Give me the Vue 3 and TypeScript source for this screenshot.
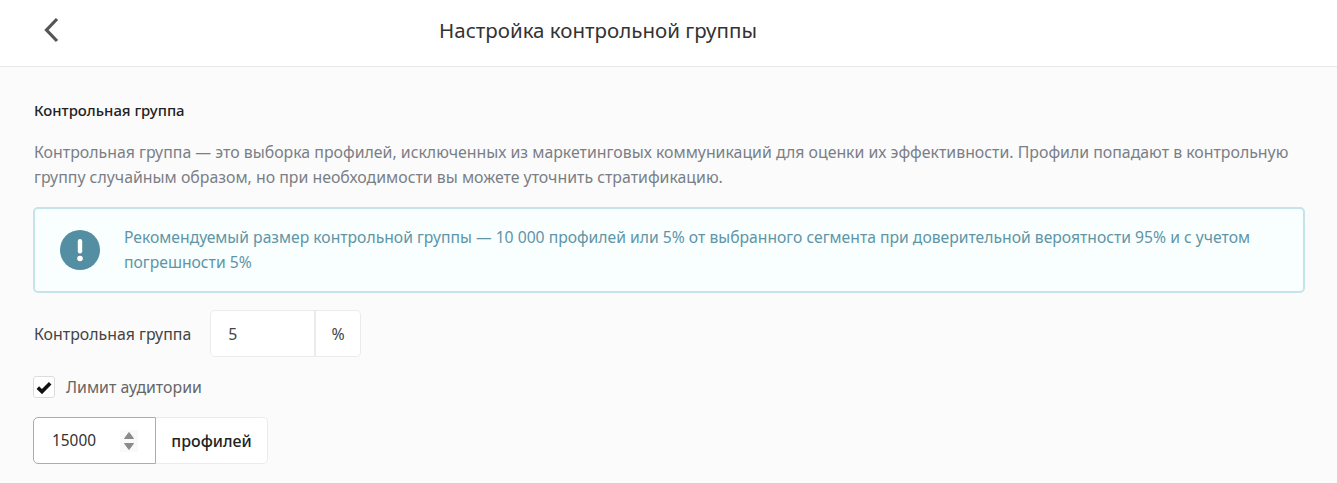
<template>
  <div class="page">
    <header class="topbar">
      <button class="back" aria-label="Назад">
        <svg width="16" height="26" viewBox="0 0 16 26">
          <path d="M14 2 L3.5 13 L14 24" fill="none" stroke="#555" stroke-width="3.2" />
        </svg>
      </button>
      <h1 class="title">Настройка контрольной группы</h1>
    </header>
    <main class="content">
      <h2 class="section-title">Контрольная группа</h2>
      <p class="description">{{ description }}</p>
      <div class="notice">
        <svg class="notice-icon" width="40" height="40" viewBox="0 0 40 40">
          <circle cx="20" cy="20" r="20" fill="#548ea2" />
          <rect x="17.8" y="9" width="4.4" height="14.5" rx="2.2" fill="#fff" />
          <circle cx="20" cy="28.5" r="2.8" fill="#fff" />
        </svg>
        <p class="notice-text">{{ notice }}</p>
      </div>
      <div class="size-row">
        <label class="size-label">Контрольная группа</label>
        <div class="group">
          <div class="field percent-field">{{ percent }}</div>
          <div class="addon percent-addon">%</div>
        </div>
      </div>
      <div class="check-row">
        <span class="checkbox">
          <svg width="16" height="13" viewBox="0 0 16 13">
            <path d="M1.8 6.6 L6 10.6 L14.2 2.2" fill="none" stroke="#111" stroke-width="3.6" />
          </svg>
        </span>
        <span class="check-label">Лимит аудитории</span>
      </div>
      <div class="group">
        <div class="field limit-field">
          <span>{{ limit }}</span>
          <span class="spinner">
            <svg width="18" height="22" viewBox="0 0 18 22">
              <rect width="18" height="22" fill="#f9f9f9" />
              <path d="M9 2.5 L13.5 8.5 H4.5 Z" fill="#8a8a8a" stroke="#8a8a8a" stroke-linejoin="round" />
              <path d="M9 19.5 L4.5 13.5 H13.5 Z" fill="#8a8a8a" stroke="#8a8a8a" stroke-linejoin="round" />
            </svg>
          </span>
        </div>
        <div class="addon limit-addon">профилей</div>
      </div>
    </main>
  </div>
</template>

<script setup lang="ts">
const description =
  'Контрольная группа — это выборка профилей, исключенных из маркетинговых коммуникаций для оценки их эффективности. Профили попадают в контрольную группу случайным образом, но при необходимости вы можете уточнить стратификацию.'
const notice =
  'Рекомендуемый размер контрольной группы — 10 000 профилей или 5% от выбранного сегмента при доверительной вероятности 95% и с учетом погрешности 5%'
const percent = 5
const limit = 15000
</script>

<style>
html,
body {
  margin: 0;
  background: #fbfbfb;
}
</style>

<style scoped>
.page {
  height: 483px;
  overflow: hidden;
  background: #fbfbfb;
  font-family: "Noto Sans", "Open Sans", sans-serif;
  font-size: 15.87px;
  color: #444;
}

.topbar {
  display: flex;
  align-items: center;
  box-sizing: border-box;
  height: 67px;
  padding-bottom: 7px;
  background: #fff;
  border-bottom: 1px solid #e8e8e8;
}

.back {
  display: flex;
  width: 53px;
  margin-left: 43px;
  padding: 0;
  border: 0;
  background: none;
}

.title {
  margin: 0 0 0 343px;
  font-size: 20.5px;
  font-weight: 400;
  color: #333;
}

.content {
  padding: 33px 32px 0 33px;
}

.section-title {
  margin: 0;
  padding-left: 1px;
  font-size: 14.9px;
  line-height: 20px;
  font-weight: 500;
  color: #222;
}

.description {
  margin: 20px 0 0;
  padding-left: 1px;
  line-height: 25px;
  color: #7a7f87;
}

.notice {
  display: flex;
  align-items: center;
  gap: 24px;
  margin-top: 17px;
  padding: 16px 40px 16px 25px;
  background: #f9ffff;
  border: 2px solid #c5e3ea;
  border-radius: 5px;
}

.notice-icon {
  flex: none;
}

.notice-text {
  margin: 0;
  font-size: 15.7px;
  line-height: 25px;
  color: #5f95a6;
}

.size-row {
  display: flex;
  align-items: center;
  gap: 19px;
  margin-top: 17px;
}

.size-label {
  padding-left: 1px;
}

.group {
  display: flex;
  height: 47px;
  box-sizing: border-box;
}

.field,
.addon {
  display: flex;
  align-items: center;
  box-sizing: border-box;
  background: #fff;
  border: 1px solid #ebebeb;
}

.field {
  border-radius: 5px 0 0 5px;
}

.addon {
  justify-content: center;
  border-left: 0;
  border-radius: 0 5px 5px 0;
}

.percent-field {
  width: 106px;
  padding-left: 17px;
  border-right-width: 2px;
}

.percent-addon {
  width: 45px;
}

.check-row {
  display: flex;
  align-items: center;
  gap: 11px;
  margin: 19px 0;
}

.checkbox {
  display: flex;
  align-items: center;
  justify-content: center;
  box-sizing: border-box;
  width: 22px;
  height: 22px;
  background: #fff;
  border: 1px solid #ddd;
  border-radius: 3px;
}

.check-label {
  color: #666;
}

.limit-field {
  justify-content: space-between;
  width: 123px;
  padding: 0 17px 0 18px;
  border-color: #9fa9e0;
  color: #333;
  font-size: 15.4px;
}

.limit-addon {
  width: 112px;
  font-size: 16px;
  font-weight: 500;
  color: #222;
}

.spinner {
  display: flex;
}
</style>
